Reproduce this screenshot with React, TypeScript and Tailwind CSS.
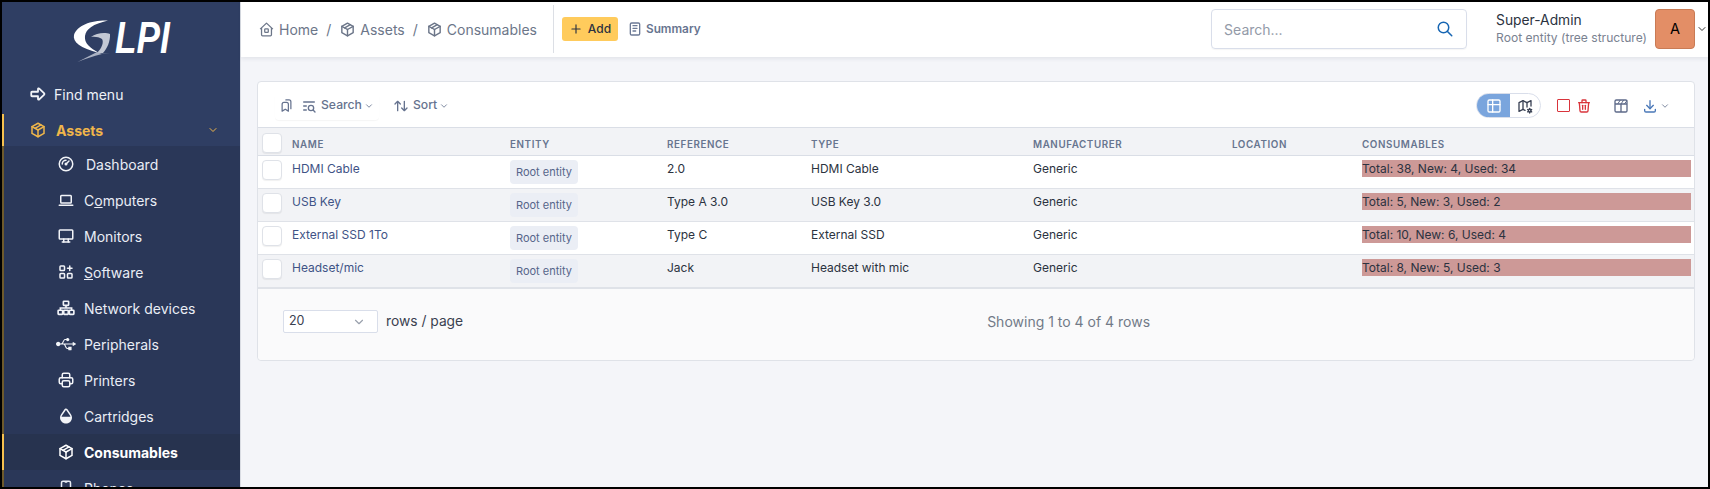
import React from "react";
import {
  TbPackage, TbPlus, TbNotes, TbSearch, TbChevronDown, TbBookmarks, TbListSearch, TbArrowsSort,
  TbTable, TbMapCog, TbTrash, TbDownload, TbArrowBigRight, TbGauge, TbDeviceLaptop,
  TbDeviceDesktop, TbApps, TbPrinter, TbDropletHalf2Filled, TbDeviceMobile,
} from "react-icons/tb";
import { FaUsb } from "react-icons/fa";

function NetworkIcon({ className }: { className?: string }) {
  return (
    <svg viewBox="0 0 24 24" fill="none" stroke="currentColor" strokeWidth="2.2" className={className}>
      <rect x="8.5" y="3" width="7" height="5.5" rx="0.8" />
      <path d="M12 8.5V12M4.5 15V12H19.5V15" />
      <rect x="1.5" y="15" width="6" height="5.5" rx="0.8" />
      <rect x="9" y="15" width="6" height="5.5" rx="0.8" />
      <rect x="16.5" y="15" width="6" height="5.5" rx="0.8" />
    </svg>
  );
}

function HomeIcon({ className }: { className?: string }) {
  return (
    <svg viewBox="0 0 24 24" fill="none" stroke="currentColor" strokeWidth="1.8" strokeLinejoin="round" className={className}>
      <path d="M3 11.5L12 3l9 8.5M5 10v9.5a1.5 1.5 0 0 0 1.5 1.5h11a1.5 1.5 0 0 0 1.5-1.5V10" />
      <rect x="9.5" y="11" width="5" height="5" rx="1" />
    </svg>
  );
}

function ColumnsIcon({ className }: { className?: string }) {
  return (
    <svg viewBox="0 0 24 24" fill="none" stroke="currentColor" strokeWidth="2" className={className}>
      <rect x="3" y="3" width="18" height="18" rx="2" />
      <path d="M3 9H21M12 9V21" />
      <path d="M7 9L11 3M12 9L16 3M17 9L21 4" strokeWidth="1.5" />
    </svg>
  );
}

const sub: [React.ComponentType<{ className?: string }>, React.ReactNode, string][] = [
  [TbGauge, "Dashboard", "mr-[11px] w-[18px]"],
  [TbDeviceLaptop, <><span>C</span><span className="underline">o</span><span>mputers</span></>, "mr-[9px] w-[18px]"],
  [TbDeviceDesktop, "Monitors", "mr-[9px] w-[18px]"],
  [TbApps, <><span className="underline">S</span><span>oftware</span></>, "mr-[9px] w-[18px]"],
  [NetworkIcon, "Network devices", "-ml-[1px] mr-[8px] w-[20px]"],
  [FaUsb, "Peripherals", "-ml-[1px] mr-[8px] w-[20px]"],
  [TbPrinter, "Printers", "mr-[9px] w-[18px]"],
  [TbDropletHalf2Filled, "Cartridges", "mr-[9px] w-[18px]"],
];

const rows = [
  ["HDMI Cable", "2.0", "HDMI Cable", "Total: 38, New: 4, Used: 34"],
  ["USB Key", "Type A 3.0", "USB Key 3.0", "Total: 5, New: 3, Used: 2"],
  ["External SSD 1To", "Type C", "External SSD", "Total: 10, New: 6, Used: 4"],
  ["Headset/mic", "Jack", "Headset with mic", "Total: 8, New: 5, Used: 3"],
];

const grid = "grid grid-cols-[34px_218px_157px_144px_222px_199px_130px_1fr]";

function Box() {
  return <div className="ml-[4px] h-[20px] w-[20px] rounded-[4px] border border-[#dfe2e8] bg-white shadow-[0_1px_1px_rgba(0,0,0,0.06)]" />;
}

function Logo() {
  return (
    <div className="flex h-[72px] shrink-0 items-start pl-[69px] pt-[18px]">
      <svg width="46" height="44" viewBox="0 0 44 44" className="shrink-0">
        <path d="M36 0.5 C20 0 5 5 2 15 C0.5 22 8 28 27 33 C18 28 12 23 13 16 C14 9 21 4 36 0.5Z" fill="#fff" />
        <path d="M19 17 C24 13 33 12 38 14 C38.5 21 35 29 31 33 L38 33.5 L25 33 C30 28 32 22 30 19 C27 17 23 16.5 19 17Z" fill="#c3c8d4" />
        <path d="M5.5 42 L25 32 L30 34 C21 36 13 39 5.5 42Z" fill="#aab1c2" />
      </svg>
      <span className="-ml-[2px] -mt-[4px] origin-left scale-x-[0.8] font-['Liberation_Sans',sans-serif] text-[44px] font-bold italic leading-[44px] text-white">LPI</span>
    </div>
  );
}

function Sidebar() {
  return (
    <aside className="flex h-full w-[238px] shrink-0 flex-col overflow-hidden bg-[#2f3e63] text-[14px] text-white">
      <Logo />
      <div className="flex h-[40px] shrink-0 items-center pl-[27px]">
        <TbArrowBigRight strokeWidth={2.4} className="mr-[7px] h-[18px] w-[18px] text-[#f2f4f8]" />
        <span className="text-[#eef1f7]">Find menu</span>
      </div>
      <div className="flex h-[32px] shrink-0 items-center border-l-[2px] border-[#f6c14f] pl-[25px] pr-[21px] text-[#f0b64a]">
        <TbPackage className="mr-[9px] h-[18px] w-[18px]" />
        <span className="flex-1 font-bold">Assets</span>
        <TbChevronDown className="h-[12px] w-[12px]" />
      </div>
      <div className="shrink-0 border-l-[2px] border-[#6e5a2c] bg-[#2a3758]">
        {sub.map(([I, label, cls], i) => (
          <div key={i} className="flex h-[36px] items-center pl-[53px] text-[#e9edf5]">
            <I className={`h-[18px] shrink-0 text-[#f2f4f8] ${cls}`} />
            <span>{label}</span>
          </div>
        ))}
        <div className="-ml-[2px] flex h-[36px] items-center border-l-[2px] border-[#f6c14f] bg-[#27334f] pl-[53px] font-bold text-white">
          <TbPackage className="mr-[9px] h-[18px] w-[18px] shrink-0" />
          <span>Consumables</span>
        </div>
        <div className="flex h-[36px] items-center pl-[53px] text-[#e9edf5]">
          <TbDeviceMobile className="mr-[9px] h-[18px] w-[18px] shrink-0" />
          <span>Phones</span>
        </div>
      </div>
    </aside>
  );
}

function Topbar() {
  return (
    <header className="z-10 flex h-[55px] shrink-0 items-center bg-white pl-[17px] pb-[1px] shadow-[0_2px_4px_rgba(30,40,70,0.08)]">
      <div className="flex items-center text-[14px] text-[#6c7689]">
        <HomeIcon className="mr-[4px] h-[17px] w-[17px]" />
        <span>Home</span>
        <span className="mx-[8px]">/</span>
        <TbPackage className="mr-[4px] h-[17px] w-[17px]" />
        <span>Assets</span>
        <span className="mx-[8px]">/</span>
        <TbPackage className="mr-[4px] h-[17px] w-[17px]" />
        <span>Consumables</span>
      </div>
      <div className="ml-[16px] h-[48px] w-px bg-[#dcdfe5]" />
      <button className="ml-[8px] flex h-[24px] w-[56px] items-center justify-center rounded-[3px] bg-[#ffcb5c] text-[12px] font-medium text-[#2c3240]">
        <TbPlus className="mr-[5px] h-[14px] w-[14px]" />
        Add
      </button>
      <TbNotes className="ml-[9px] h-[16px] w-[16px] text-[#6c7a96]" />
      <span className="ml-[3px] mt-[1px] text-[11.8px] font-semibold text-[#67748f]">Summary</span>
      <div className="ml-auto flex h-[40px] w-[256px] items-center justify-between rounded-[4px] border border-[#d9deea] pl-[12px] pr-[12px] shadow-[0_1px_1px_rgba(0,0,0,0.04)]">
        <span className="text-[14px] text-[#939aa8]">Search...</span>
        <TbSearch className="h-[18px] w-[18px] text-[#1766b3]" />
      </div>
      <div className="ml-[29px] flex flex-col">
        <span className="text-[13.8px] leading-[17px] text-[#2b3240]">Super-Admin</span>
        <span className="text-[12.1px] leading-[17px] text-[#7a8291]">Root entity (tree structure)</span>
      </div>
      <div className="ml-[8px] flex h-[40px] w-[40px] items-center justify-center rounded-[4px] border border-[#c97b55] bg-[#e38e66] text-[14.5px] text-black">A</div>
      <TbChevronDown className="ml-[1px] h-[12px] w-[12px] text-[#333]" />
    </header>
  );
}

function Toolbar() {
  return (
    <div className="flex h-[45px] items-center pt-[2px] text-[12.2px] text-[#66738f]">
      <div className="ml-[17px] flex h-[28px] items-center rounded-[4px] pl-[4px] pr-[5px] shadow-[0_1px_1px_rgba(0,0,0,0.04)]">
        <TbBookmarks className="h-[15px] w-[15px]" />
        <TbListSearch className="ml-[7px] h-[16px] w-[16px]" />
        <span className="ml-[4px] font-medium">Search</span>
        <TbChevronDown className="ml-[2px] h-[10px] w-[10px]" />
      </div>
      <TbArrowsSort className="ml-[14px] h-[16px] w-[16px]" />
      <span className="ml-[4px] font-medium">Sort</span>
      <TbChevronDown className="ml-[2px] h-[10px] w-[10px]" />
      <div className="ml-auto flex h-[25px] w-[65px] overflow-hidden rounded-full border border-[#d9deea]">
        <div className="flex w-[33px] items-center justify-center bg-[#7aa5dd] text-white"><TbTable className="h-[16px] w-[16px]" /></div>
        <div className="flex flex-1 items-center justify-center text-[#3a4255]"><TbMapCog className="h-[16px] w-[16px]" /></div>
      </div>
      <div className="ml-[16px] h-[13px] w-[13px] rounded-[1px] border-[1.5px] border-[#d9343b]" />
      <TbTrash className="ml-[6px] h-[16px] w-[16px] text-[#d9343b]" />
      <ColumnsIcon className="ml-[21px] h-[16px] w-[16px] text-[#5d6a89]" />
      <TbDownload className="ml-[13px] h-[16px] w-[16px] text-[#4a78b8]" />
      <TbChevronDown className="ml-[2px] mr-[24px] h-[10px] w-[10px] text-[#66738f]" />
    </div>
  );
}

function Table() {
  const heads = ["NAME", "ENTITY", "REFERENCE", "TYPE", "MANUFACTURER", "LOCATION", "CONSUMABLES"];
  return (
    <div>
      <div className={`${grid} h-[29px] items-start border-y border-[#dadee6] bg-[#f2f3f6] pt-[5px]`}>
        <Box />
        {heads.map((h) => (
          <span key={h} className="pt-[5px] text-[9.8px] font-semibold leading-[14px] tracking-[0.6px] text-[#67758f]">{h}</span>
        ))}
      </div>
      {rows.map((r, i) => (
        <div key={r[0]} className={`${grid} h-[33px] border-b border-[#dfe2e8] pt-[4px] text-[12px] leading-[17px] text-[#2b3240] last:h-[34px] last:border-b-[2px] ${i % 2 ? "bg-[#f2f3f6]" : "bg-white"}`}>
          <Box />
          <span className="text-[#3f5386]">{r[0]}</span>
          <div><span className="inline-block h-[24px] w-[68px] rounded-[4px] bg-[#ebeef5] text-center text-[11px] leading-[24px] text-[#56658a]">Root entity</span></div>
          <span>{r[1]}</span>
          <span>{r[2]}</span>
          <span>Generic</span>
          <span />
          <div className="mr-[3px] h-[17px] bg-[#cd9997] text-[#2b3240]">{r[3]}</div>
        </div>
      ))}
    </div>
  );
}

function Footer() {
  return (
    <div className="flex h-[71px] items-center rounded-b-[4px] bg-[#fafafb] pb-[6px] pl-[25px] text-[#3a4150]">
      <div className="flex h-[23px] w-[95px] items-center justify-between rounded-[2px] border border-[#d9deea] bg-white pl-[5px] pr-[11px] text-[12.5px]">
        <span>20</span>
        <TbChevronDown className="h-[14px] w-[14px] text-[#9aa1ad]" />
      </div>
      <span className="ml-[8px] text-[13.8px]">rows / page</span>
      <span className="ml-[524px] text-[14px] text-[#727a88]">Showing 1 to 4 of 4 rows</span>
    </div>
  );
}

export default function App() {
  return (
    <div className="flex h-[489px] w-[1710px] overflow-hidden border-2 border-black bg-[#f4f5f9] font-['Inter',sans-serif]">
      <Sidebar />
      <main className="flex min-w-0 flex-1 flex-col border-l border-[#d9dce3]">
        <Topbar />
        <div className="pl-[16px] pr-[13px] pt-[24px]">
          <div className="overflow-hidden rounded-[4px] border border-[#dfe2e8] bg-white">
            <Toolbar />
            <Table />
            <Footer />
          </div>
        </div>
      </main>
    </div>
  );
}
